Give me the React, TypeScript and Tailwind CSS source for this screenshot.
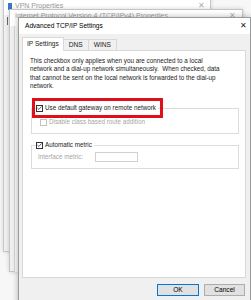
function Box({ checked, disabled }: { checked?: boolean; disabled?: boolean }) {
  return (
    <span
      className={`flex h-[7px] w-[7px] shrink-0 items-center justify-center border bg-white ${
        disabled ? "border-[#c4c4c4]" : "border-[#333333]"
      }`}
    >
      {checked && (
        <svg viewBox="0 0 8 8" className="h-[6px] w-[6px]">
          <polyline points="0.8,4.2 3,6.3 7.2,1.5" fill="none" stroke="#111" strokeWidth="1.1" />
        </svg>
      )}
    </span>
  );
}

export default function App() {
  return (
    <div className="relative h-[300px] w-[251px] overflow-hidden bg-[#f7f7f7] font-['Liberation_Sans',sans-serif] text-[6.3px] leading-[8.3px] text-[#1a1a1a]">
      {/* VPN Properties (behind) */}
      <div className="absolute left-[3px] top-[-6px] h-[258px] w-[208px] border border-[#c8c8c8] bg-[#f0f0f0] shadow-[0_0_4px_rgba(0,0,0,0.15)]">
        <div className="flex h-[20px] items-center bg-white pl-[4px] pt-[2px] text-[7px] text-[#9a9a9a]">
          <span className="mr-[3px] h-[7px] w-[4px] bg-[#3b78c4]" />
          <span>VPN Properties</span>
          <span className="ml-auto mr-[5px] text-[8px] text-[#b0b0b0]">✕</span>
        </div>
        <div className="ml-[3px] mt-[2px] h-[8px] w-[1px] bg-[#666]" />
      </div>

      {/* IPv4 Properties (behind) */}
      <div className="absolute left-[9px] top-[9px] h-[263px] w-[234px] border border-[#c4c4c4] bg-[#f0f0f0] shadow-[0_0_4px_rgba(0,0,0,0.18)]">
        <div className="flex h-[16px] items-start bg-white pl-[5px] pt-[2px] text-[7px] text-[#a0a0a0]">
          <span>Internet Protocol Version 4 (TCP/IPv4) Properties</span>
          <span className="ml-auto mr-[6px] text-[8px] text-[#b0b0b0]">✕</span>
        </div>
        <div className="ml-[4px] h-[246px] w-[6px] border-l border-[#d6d6d6] bg-[#fafafa]" />
      </div>

      {/* Advanced TCP/IP Settings */}
      <div className="absolute left-[18px] top-[17px] flex h-[290px] w-[233px] flex-col border border-[#9a9a9a] bg-[#f0f0f0] shadow-[0_0_6px_rgba(0,0,0,0.3)]">
        <div className="flex h-[16px] items-center bg-white pl-[6px] text-[6.6px] text-black">
          <span>Advanced TCP/IP Settings</span>
          <span className="ml-auto mr-[3px] text-[8px] font-light text-[#222]">✕</span>
        </div>

        <div className="flex flex-col px-[3px]">
          {/* tabs */}
          <div className="mt-[3px] flex items-end text-[6.6px]">
            <div className="relative z-10 -mb-px flex h-[14px] items-center border border-b-0 border-[#d9d9d9] bg-white px-[4px]">
              IP Settings
            </div>
            <div className="flex h-[11px] items-center border border-b-0 border-l-0 border-[#d9d9d9] bg-[#f0f0f0] px-[5px]">
              DNS
            </div>
            <div className="flex h-[11px] items-center border border-b-0 border-l-0 border-[#d9d9d9] bg-[#f0f0f0] px-[5px]">
              WINS
            </div>
          </div>

          {/* panel */}
          <div className="relative h-[228px] w-[224px] border border-[#d9d9d9] bg-white pl-[7px] pr-[2px] pt-[6px]">
            <p className="whitespace-nowrap">
              This checkbox only applies when you are connected to a local
              <br />
              network and a dial-up network simultaneously.&nbsp; When checked, data
              <br />
              that cannot be sent on the local network is forwarded to the dial-up
              <br />
              network.
            </p>

            {/* default gateway group */}
            <div className="mt-[18px] ml-[1px] h-[26px] w-[208px] border border-[#dcdcdc]">
              <div className="-mt-[5px] ml-[4px] flex w-fit items-center gap-[2px] bg-white pr-[2px]">
                <Box checked />
                <span>Use default gateway on remote network</span>
              </div>
              <div className="ml-[8px] mt-[6px] flex items-center gap-[2px] text-[#a6a6a6]">
                <Box disabled />
                <span>Disable class based route addition</span>
              </div>
            </div>

            {/* metric group */}
            <div className="mt-[11px] ml-[1px] h-[24px] w-[208px] border border-[#dcdcdc]">
              <div className="-mt-[5px] ml-[4px] flex w-fit items-center gap-[2px] bg-white pr-[2px]">
                <Box checked />
                <span>Automatic metric</span>
              </div>
              <div className="ml-[6px] mt-[3px] flex items-center text-[#a6a6a6]">
                <span className="w-[57px]">Interface metric:</span>
                <span className="h-[10px] w-[43px] border border-[#d0d0d0] bg-white" />
              </div>
            </div>

            {/* annotation */}
            <div className="absolute left-[9px] top-[47px] h-[20px] w-[131px] border-[3px] border-[#e0101a]" />
          </div>

          {/* buttons */}
          <div className="mt-[6px] flex justify-end gap-[5px] pr-[2px]">
            <button className="flex h-[12px] w-[42px] items-center justify-center border border-[#0078d7] bg-[#e1e1e1] text-[6.6px] text-black">
              OK
            </button>
            <button className="flex h-[12px] w-[41px] items-center justify-center border border-[#adadad] bg-[#e1e1e1] text-[6.6px] text-black">
              Cancel
            </button>
          </div>
        </div>
      </div>
    </div>
  );
}
